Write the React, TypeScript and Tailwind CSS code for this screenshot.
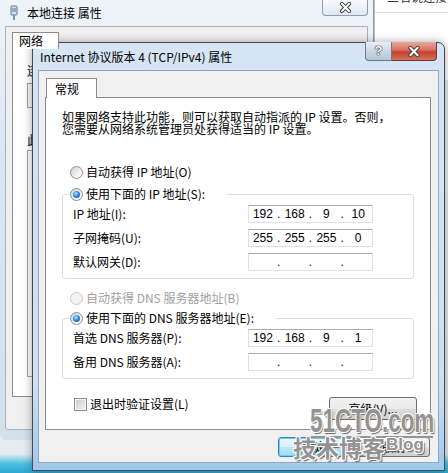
import React from "react";

const cjk = "font-['Noto_Sans_CJK_SC','Liberation_Sans',sans-serif]";

function Radio({ checked, disabled }: { checked?: boolean; disabled?: boolean }) {
  return (
    <span
      className={
        "flex h-[13px] w-[13px] shrink-0 items-center justify-center rounded-full border " +
        (disabled
          ? "border-[#c9c9c9] bg-[#f3f3f3]"
          : "border-[#8e8f8f] bg-[linear-gradient(135deg,#cfcfcf,#f7f7f7_70%,#ffffff)]")
      }
    >
      {checked && (
        <span className="h-[7px] w-[7px] rounded-full bg-[radial-gradient(circle_at_40%_35%,#b4e6ff,#2f8fe0_45%,#0b4a9c)]" />
      )}
    </span>
  );
}

function IpBox({ parts }: { parts?: string[] }) {
  const p = parts ?? ["", "", "", ""];
  return (
    <div className="flex h-[18px] w-[125px] items-center border border-[#dbdfe6] border-t-[#abadb3] bg-white font-['Liberation_Sans',sans-serif] text-[12px] text-black">
      {p.map((v, i) => (
        <React.Fragment key={i}>
          <span className="w-[28px] text-center">{v}</span>
          {i < 3 && <span className="w-[4px] text-center">.</span>}
        </React.Fragment>
      ))}
    </div>
  );
}

function Row({ label, parts }: { label: string; parts?: string[] }) {
  return (
    <div className="flex h-[18px] items-center">
      <span className="w-[175px]">{label}</span>
      <IpBox parts={parts} />
    </div>
  );
}

function Group({ legend, children }: { legend: string; children: React.ReactNode }) {
  return (
    <fieldset className="mx-[16px] rounded-[3px] border border-[#d5dfe5]">
      <legend className="ml-[6px] pl-[1px] pr-[22px]">
        <span className="flex h-[16px] items-center gap-[3px]">
          <Radio checked />
          <span>{legend}</span>
        </span>
      </legend>
      <div className="flex flex-col gap-[6px] pb-[7px] pl-[10px] pt-[3px]">{children}</div>
    </fieldset>
  );
}

function XGlyph({ className }: { className?: string }) {
  return (
    <svg viewBox="0 0 14 12" className={className}>
      <path d="M3 2 L11 10 M11 2 L3 10" stroke="#3a3a3a" strokeWidth="4.2" strokeLinecap="round" />
      <path d="M3 2 L11 10 M11 2 L3 10" stroke="#ffffff" strokeWidth="2.2" strokeLinecap="round" />
    </svg>
  );
}

function WinButton({ children, primary }: { children: React.ReactNode; primary?: boolean }) {
  return (
    <div
      className={
        "flex h-[20px] w-[73px] items-center justify-center rounded-[3px] border text-[12px] " +
        (primary
          ? "border-[#3c7fb1] bg-[linear-gradient(to_bottom,#eaf6fd_0%,#d9f0fc_50%,#bee6fd_51%,#a7d9f5_100%)] shadow-[inset_0_0_0_1px_#5fd3ff]"
          : "border-[#707070] bg-[linear-gradient(to_bottom,#f2f2f2_0%,#ebebeb_50%,#dddddd_51%,#cfcfcf_100%)]")
      }
    >
      {children}
    </div>
  );
}

function BackWindow() {
  return (
    <div className="absolute left-0 top-0 h-[440px] w-[374px] rounded-b-[6px] border-r border-[#8a97a5] bg-[linear-gradient(to_bottom,#eef4f9,#dbe6f1_35%,#d3e1ee)]">
      <div className="flex h-[26px] items-center gap-[8px] pl-[9px]">
        <svg viewBox="0 0 10 16" className="h-[16px] w-[10px]">
          <rect x="2" y="1" width="6" height="9" rx="1" fill="#cfe0ef" stroke="#5d7894" strokeWidth="1" />
          <rect x="3.5" y="3" width="1" height="4" fill="#5d7894" />
          <rect x="5.5" y="3" width="1" height="4" fill="#5d7894" />
          <rect x="4" y="10" width="2" height="5" fill="#7e96ad" />
        </svg>
        <span className={cjk + " text-[12px] text-black"}>本地连接 属性</span>
      </div>
      <div className="absolute right-[5px] top-0 flex h-[16px] w-[46px] items-center justify-center rounded-b-[4px] border border-t-0 border-[#8c9cae] bg-[linear-gradient(to_bottom,#f7fafd,#dfe8f2)]">
        <XGlyph className="h-[11px] w-[13px]" />
      </div>
      <div className="mx-[5px] h-[404px] rounded-b-[3px] border border-[#a3b1c0] bg-[#f0f0f0] pl-[6px] pr-[6px] pt-[5px]">
        <div className={cjk + " relative z-10 -mb-px flex h-[17px] w-[47px] items-center border border-b-0 border-[#898c95] bg-white pl-[6px] text-[12px]"}>
          网络
        </div>
        <div className={cjk + " h-[349px] border border-[#898c95] bg-white pl-[14px] pt-[16px] text-[12px]"}>
          <div className="leading-[12px]">连</div>
          <div className="mt-[6px] h-[25px] w-[300px] border border-[#9a9ea6] bg-[#f6f6f6]" />
          <div className="mt-[26px] leading-[12px]">此</div>
          <div className="mt-[4px] h-[227px] w-[300px] border border-[#9a9ea6] bg-white" />
        </div>
      </div>
    </div>
  );
}

function Dialog() {
  return (
    <div className="absolute left-[32px] top-[42px] h-[429px] w-[413px] rounded-t-[7px] border border-[#4a4a4a] bg-[linear-gradient(to_bottom,#d6e5f3_0%,#cddff0_80%,#9fc8ea_100%)] shadow-[0_0_10px_rgba(0,0,0,0.35)]">
      <div className="relative flex h-[27px] items-center pl-[7px]">
        <span className={cjk + " text-[12px] text-black"}>Internet 协议版本 4 (TCP/IPv4) 属性</span>
        <div className="absolute -top-px right-[7px] flex h-[19px]">
          <div className="flex w-[27px] items-center justify-center rounded-bl-[4px] border border-t-0 border-[#6b7b8b] bg-[linear-gradient(to_bottom,#e9f0f6,#c9d7e4_50%,#b4c6d8)] font-['Liberation_Sans',sans-serif] text-[13px] font-bold text-white [text-shadow:0_0_1px_#222,0_0_1px_#222,0_0_1px_#222]">
            ?
          </div>
          <div className="flex w-[45px] items-center justify-center rounded-br-[4px] border border-l-0 border-t-0 border-[#6b3a34] bg-[linear-gradient(to_bottom,#e9a99c,#d8705d_45%,#c7422c_55%,#d5715a)]">
            <XGlyph className="h-[11px] w-[14px]" />
          </div>
        </div>
      </div>
      <div className={cjk + " mx-[5px] h-[393px] border border-[#8ea6bf] bg-[#f0f0f0] pl-[6px] pr-[7px] pt-[7px] text-[12px] text-black"}>
        <div className="relative z-10 -mb-px ml-px flex h-[20px] w-[51px] items-center border border-b-0 border-[#898c95] bg-white pl-[8px]">
          常规
        </div>
        <div className="flex h-[333px] flex-col border border-[#898c95] bg-white">
          <div className="ml-[16px] mt-[13px] leading-[12px]">
            <div>如果网络支持此功能，则可以获取自动指派的 IP 设置。否则，</div>
            <div>您需要从网络系统管理员处获得适当的 IP 设置。</div>
          </div>
          <div className="ml-[24px] mt-[29px] flex h-[16px] items-center gap-[3px]">
            <Radio />
            <span>自动获得 IP 地址(O)</span>
          </div>
          <div className="mt-[6px]">
            <Group legend="使用下面的 IP 地址(S):">
              <Row label="IP 地址(I):" parts={["192", "168", "9", "10"]} />
              <Row label="子网掩码(U):" parts={["255", "255", "255", "0"]} />
              <Row label="默认网关(D):" />
            </Group>
          </div>
          <div className="ml-[24px] mt-[11px] flex h-[16px] items-center gap-[3px] text-[#a0a0a0]">
            <Radio disabled />
            <span>自动获得 DNS 服务器地址(B)</span>
          </div>
          <div className="mt-[4px]">
            <Group legend="使用下面的 DNS 服务器地址(E):">
              <Row label="首选 DNS 服务器(P):" parts={["192", "168", "9", "1"]} />
              <Row label="备用 DNS 服务器(A):" />
            </Group>
          </div>
          <div className="mt-[17px] flex items-start justify-between pl-[28px] pr-[13px]">
            <div className="flex h-[16px] items-center gap-[3px]">
              <span className="h-[13px] w-[13px] border border-[#8e8f8f] bg-[linear-gradient(135deg,#cbcbcb,#f4f4f4)] shadow-[inset_0_0_0_1px_#f4f4f4]" />
              <span>退出时验证设置(L)</span>
            </div>
            <div className="mt-px flex h-[23px] w-[88px] items-center justify-center rounded-[3px] border border-[#707070] bg-[linear-gradient(to_bottom,#f2f2f2_0%,#ebebeb_50%,#dddddd_51%,#cfcfcf_100%)]">
              高级(V)...
            </div>
          </div>
        </div>
        <div className="mt-[7px] flex justify-end gap-[6px] pr-px">
          <WinButton primary>确定</WinButton>
          <WinButton>取消</WinButton>
        </div>
      </div>
    </div>
  );
}

function Watermark() {
  const outline =
    "[text-shadow:1px_1px_0_#fff,-1px_-1px_0_#fff,1px_-1px_0_#fff,-1px_1px_0_#fff,2px_2px_1px_#666]";
  return (
    <>
      <div className={"absolute left-[310px] top-[403px] z-20 origin-left scale-x-[0.66] whitespace-nowrap font-['Liberation_Sans',sans-serif] text-[34px] font-bold leading-none text-[#939393] " + outline}>
        51CTO.com
      </div>
      <div className="absolute left-[310px] top-[436px] z-20 h-[2px] w-[123px] bg-[#939393]" />
      <div className={cjk + " absolute left-[293px] top-[436px] z-20 whitespace-nowrap text-[23px] font-bold leading-none text-[#939393] " + outline}>
        技术博客
      </div>
      <div className={"absolute left-[386px] top-[436px] z-20 whitespace-nowrap font-['Liberation_Sans',sans-serif] text-[17px] font-bold leading-none text-[#939393] " + outline}>
        Blog
      </div>
    </>
  );
}

export default function App() {
  return (
    <div className="relative h-[473px] w-[448px] overflow-hidden bg-[linear-gradient(to_bottom,#e9eff4_0%,#e4ebf1_96%,#4fc0df_98%,#2aa8d4_100%)]">
      <div className="absolute left-[374px] top-0 h-[80px] w-[74px] border-l border-[#b9c3cd] bg-white">
        <div className={cjk + " -mt-[12px] h-[18px] overflow-hidden whitespace-nowrap pl-[12px] text-[12px] leading-[18px] text-[#333]"}>三右说连接</div>
        <div className="mt-[6px] h-px w-full bg-[#d6dbe0]" />
      </div>
      <BackWindow />
      <Dialog />
      <Watermark />
    </div>
  );
}
